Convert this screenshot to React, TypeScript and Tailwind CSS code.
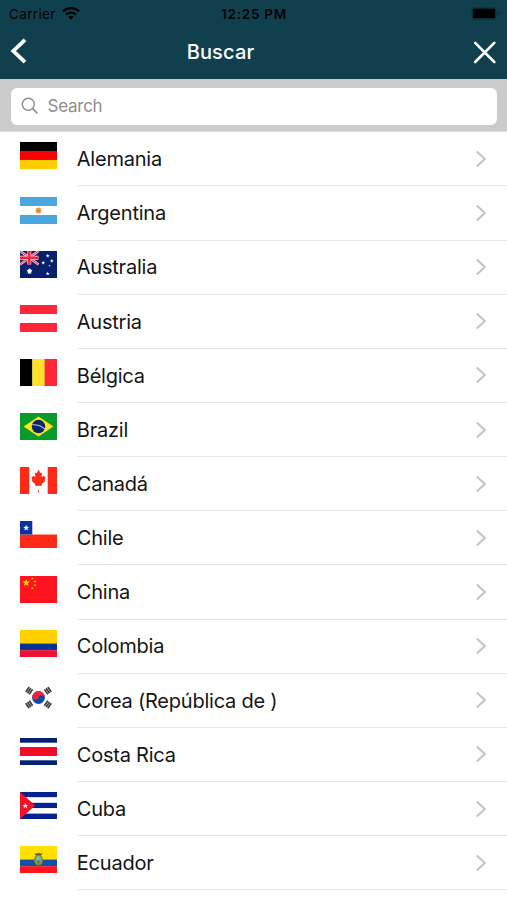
import { ReactNode } from 'react';

const star = (cx: number, cy: number, r: number) =>
  Array.from({ length: 10 }, (_, i) => {
    const radius = i % 2 === 0 ? r : r * 0.42;
    const angle = (Math.PI / 5) * i - Math.PI / 2;
    return `${(cx + radius * Math.cos(angle)).toFixed(2)},${(cy + radius * Math.sin(angle)).toFixed(2)}`;
  }).join(' ');

const Stripes = ({ colors }: { colors: string[] }) => (
  <>
    {colors.map((color, i) => (
      <rect
        key={i}
        y={(27 / colors.length) * i}
        width="37"
        height={27 / colors.length}
        fill={color}
      />
    ))}
  </>
);

const Trigram = ({ x, y, angle }: { x: number; y: number; angle: number }) => (
  <path
    d="M-3 -2.1H3M-3 0H3M-3 2.1H3"
    transform={`translate(${x} ${y}) rotate(${angle})`}
    stroke="#3d3d3d"
    strokeWidth="1.7"
  />
);

const countries: { name: string; flag: ReactNode }[] = [
  { name: 'Alemania', flag: <Stripes colors={['#000000', '#ff0000', '#ffcc00']} /> },
  {
    name: 'Argentina',
    flag: (
      <>
        <Stripes colors={['#4aa6de', '#ffffff', '#4aa6de']} />
        <circle cx="18.5" cy="13.5" r="2.9" fill="#e9a046" />
        <circle cx="18.5" cy="13.5" r="1.6" fill="#dc8a35" />
      </>
    ),
  },
  {
    name: 'Australia',
    flag: (
      <>
        <rect width="37" height="27" fill="#06206c" />
        <path d="M0 0L18.5 13.5M18.5 0L0 13.5" stroke="#f3c3d0" strokeWidth="2.6" />
        <path d="M0 0L18.5 13.5M18.5 0L0 13.5" stroke="#ee3048" strokeWidth="1" />
        <path d="M9.25 0V13.5M0 6.75H18.5" stroke="#f8d5dc" strokeWidth="4" />
        <path d="M9.25 0V13.5M0 6.75H18.5" stroke="#ee2440" strokeWidth="2.6" />
        <polygon points={star(9.5, 20.2, 3.2)} fill="#fff" />
        <ellipse cx="9.5" cy="20.2" rx="2" ry="2.5" fill="#fff" />
        <polygon points={star(27.7, 4.8, 2)} fill="#fff" />
        <polygon points={star(23.2, 11.8, 2)} fill="#fff" />
        <polygon points={star(31.8, 10, 2)} fill="#fff" />
        <polygon points={star(27.7, 22.6, 2.1)} fill="#fff" />
        <polygon points={star(29.6, 14.7, 1.1)} fill="#fff" />
      </>
    ),
  },
  { name: 'Austria', flag: <Stripes colors={['#ff2638', '#ffffff', '#ff2638']} /> },
  {
    name: 'Bélgica',
    flag: (
      <>
        <rect width="12.5" height="27" fill="#000" />
        <rect x="12.3" width="12.5" height="27" fill="#ffe12b" />
        <rect x="24.6" width="12.4" height="27" fill="#ff2638" />
      </>
    ),
  },
  {
    name: 'Brazil',
    flag: (
      <>
        <rect width="37" height="27" fill="#089b2c" />
        <path d="M3.6 13.5L18.5 3.5L33.4 13.5L18.5 23.5Z" fill="#ffe511" />
        <circle cx="18.5" cy="13.5" r="6.7" fill="#08246f" />
        <path d="M12.2 11.8Q19.5 11.2 24.7 16" stroke="#b9cbe0" strokeWidth="1.1" fill="none" />
      </>
    ),
  },
  {
    name: 'Canadá',
    flag: (
      <>
        <rect width="37" height="27" fill="#fff" />
        <rect width="9.3" height="27" fill="#ff2917" />
        <rect x="27.7" width="9.3" height="27" fill="#ff2917" />
        <path
          d="M18.5 2.8L20.4 6.2L22.2 5.5L21.6 10L24 8.7L24.6 9.9L25.5 10L24.7 13.3L25.3 14L21.8 17.1L22 18.7L18.5 18.8L15 18.7L15.2 17.1L11.7 14L12.3 13.3L11.5 10L12.4 9.9L13 8.7L15.4 10L14.8 5.5L16.6 6.2Z"
          fill="#ff2917"
        />
        <path d="M18.5 22.8V25.6" stroke="#ff5a4c" strokeWidth="1" />
      </>
    ),
  },
  {
    name: 'Chile',
    flag: (
      <>
        <rect width="37" height="27" fill="#fff" />
        <rect y="13.5" width="37" height="13.5" fill="#ff2917" />
        <rect width="12.3" height="13.5" fill="#0b32a0" />
        <polygon points={star(6.2, 6.9, 3.1)} fill="#fff" />
      </>
    ),
  },
  {
    name: 'China',
    flag: (
      <>
        <rect width="37" height="27" fill="#ff1420" />
        <polygon points={star(6.2, 6.8, 3.9)} fill="#ffe000" />
        <polygon points={star(12.3, 2.5, 1.5)} fill="#ffd000" />
        <polygon points={star(15, 5.4, 1.5)} fill="#ffd000" />
        <polygon points={star(15, 9.3, 1.5)} fill="#ffd000" />
        <polygon points={star(12.3, 12.2, 1.5)} fill="#ffd000" />
      </>
    ),
  },
  {
    name: 'Colombia',
    flag: (
      <>
        <rect width="37" height="13.5" fill="#ffd100" />
        <rect y="13.5" width="37" height="6.8" fill="#063394" />
        <rect y="20.2" width="37" height="6.8" fill="#ed1030" />
      </>
    ),
  },
  {
    name: 'Corea (República de )',
    flag: (
      <>
        <rect width="37" height="27" fill="#fff" />
        <circle cx="18.5" cy="13.5" r="6.4" fill="#0a48a8" />
        <path
          d="M12.1 13.5A6.4 6.4 0 0 1 24.9 13.5A3.2 3.2 0 0 0 18.5 13.5A3.2 3.2 0 0 1 12.1 13.5Z"
          transform="rotate(20 18.5 13.5)"
          fill="#f0243a"
        />
        <Trigram x={9.2} y={6.7} angle={-56} />
        <Trigram x={27.8} y={6.7} angle={56} />
        <Trigram x={9.2} y={20.5} angle={56} />
        <Trigram x={27.8} y={20.5} angle={-56} />
      </>
    ),
  },
  {
    name: 'Costa Rica',
    flag: (
      <>
        <rect width="37" height="27" fill="#fff" />
        <rect width="37" height="4.7" fill="#05206e" />
        <rect y="9" width="37" height="9" fill="#f20d26" />
        <rect y="22.3" width="37" height="4.7" fill="#05206e" />
      </>
    ),
  },
  {
    name: 'Cuba',
    flag: (
      <>
        <Stripes colors={['#062290', '#ffffff', '#062290', '#ffffff', '#062290']} />
        <path d="M0 0L15.3 13.5L0 27Z" fill="#f40f2b" />
        <polygon points={star(5.3, 13.9, 2.9)} fill="#fff" />
      </>
    ),
  },
  {
    name: 'Ecuador',
    flag: (
      <>
        <rect width="37" height="13.5" fill="#ffe000" />
        <rect y="13.5" width="37" height="6.8" fill="#0d51a8" />
        <rect y="20.2" width="37" height="6.8" fill="#ff1420" />
        <path d="M14.2 7.3Q16.5 8.2 18.5 7Q20.5 8.2 22.8 7.3L20.3 9.9H16.7Z" fill="#4c4326" />
        <ellipse cx="18.5" cy="14" rx="4.5" ry="5.6" fill="#8a8a3c" />
        <ellipse cx="18.5" cy="13.2" rx="2.5" ry="3.5" fill="#79b9b4" />
        <path d="M16.3 14.5H20.7L18.5 17.2Z" fill="#3f7b4c" />
        <path d="M17 19.7H20" stroke="#6b5734" strokeWidth="1.2" />
      </>
    ),
  },
];

const StatusBar = () => {
  return (
    <div className="flex h-7 items-center justify-between pr-[6px] pl-[9px] text-black">
      <div className="flex w-[120px] items-center gap-[6px]">
        <span className="text-[13.5px] tracking-[0.35px]">Carrier</span>
        <svg width="18" height="14" viewBox="0 0 18 14" fill="none" stroke="currentColor">
          <path d="M1 4.3C5.4 0.1 12.6 0.1 17 4.3" strokeWidth="2.4" />
          <path d="M4 7.5C6.8 4.9 11.2 4.9 14 7.5" strokeWidth="2.2" />
          <path d="M6.2 9.8Q9 7.5 11.8 9.8L9 12.7Z" fill="currentColor" stroke="none" />
        </svg>
      </div>
      <span className="mr-[2px] text-[13.5px] font-semibold tracking-[0.75px]">12:25 PM</span>
      <div className="flex w-[120px] items-center justify-end">
        <svg width="30" height="14" viewBox="0 0 30 14">
          <rect x="0.5" y="0.3" width="25" height="12.4" rx="3" fill="#08303c" />
          <rect x="2" y="1.8" width="22" height="9.3" rx="1" fill="#000" />
          <path d="M26.6 4.3V8.7Q28.8 7.8 28.8 6.5Q28.8 5.1 26.6 4.3Z" fill="#08303c" />
        </svg>
      </div>
    </div>
  );
};

const Header = () => {
  return (
    <header className="h-[79px] bg-[#10404e]">
      <StatusBar />
      <div className="flex h-[48px] items-center justify-between pr-[10px] pl-[10px]">
        <button type="button" aria-label="Back" className="w-20">
          <svg width="18" height="28" viewBox="0 0 18 28" fill="none" stroke="#fff" strokeWidth="3.8">
            <path d="M15 1.8L3.3 13L15 24.2" />
          </svg>
        </button>
        <h1 className="mr-[122px] text-[20px] font-medium tracking-[0.15px] text-white">Buscar</h1>
        <button type="button" aria-label="Close" className="flex justify-end">
          <svg width="24" height="24" viewBox="0 0 24 24" fill="none" stroke="#fff" strokeWidth="2.6" strokeLinecap="round">
            <path d="M2.2 2.9L21.3 22M21.3 2.9L2.2 22" />
          </svg>
        </button>
      </div>
    </header>
  );
};

const SearchBar = () => {
  return (
    <div className="h-[53px] border-b border-[#dcdcdc] bg-[#cbcbcb] px-[10.5px] pt-[8.5px]">
      <label className="flex h-[37px] items-center gap-[9px] rounded-[6px] bg-white pl-[10px]">
        <svg width="18" height="18" viewBox="0 0 18 18" fill="none" stroke="#8e8e8e" strokeWidth="1.4">
          <circle cx="7.3" cy="7.3" r="6" />
          <path d="M11.7 11.7L16.3 16.3" strokeWidth="1.7" />
        </svg>
        <input
          type="text"
          placeholder="Search"
          className="w-80 pt-[2px] text-[17px] tracking-[-0.25px] placeholder-[#8e8e8e] outline-none"
        />
      </label>
    </div>
  );
};

const App = () => {
  return (
    <div className="h-[900px] overflow-hidden bg-white font-['Inter','Liberation_Sans',sans-serif]">
      <Header />
      <SearchBar />
      <ul className="pt-[0.3px]">
        {countries.map((val) => (
          <li key={val.name} className="flex h-[54.15px] pl-[20.3px]">
            <svg width="37" height="27" viewBox="0 0 37 27" className="mt-[10.2px] shrink-0">
              {val.flag}
            </svg>
            <div className="ml-[19.5px] flex grow items-center justify-between border-b border-[#e6e6e6] pr-[20px]">
              <span className="pt-[0.5px] text-[20px] tracking-[-0.23px] text-[#151515]">{val.name}</span>
              <svg width="12" height="18" viewBox="0 0 12 18" fill="none" stroke="#c4c4c6" strokeWidth="2.1">
                <path d="M1.8 1.5L9.8 9L1.8 16.5" />
              </svg>
            </div>
          </li>
        ))}
      </ul>
    </div>
  );
};

export default App;
